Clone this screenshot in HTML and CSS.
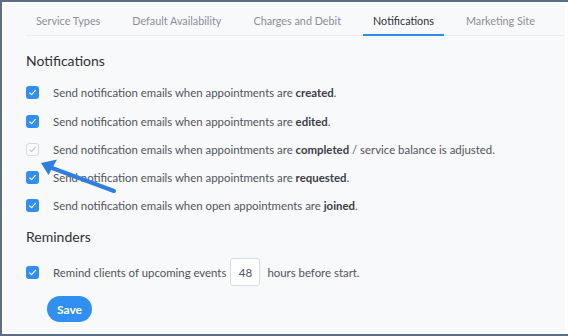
FILE: index.html
```html
<!DOCTYPE html>
<html>
<head>
<meta charset="utf-8">
<link rel="stylesheet" href="styles.css">
</head>
<body>
<div class="frame">
  <div class="panel">
    <nav class="tabs">
      <span class="tab">Service Types</span>
      <span class="tab">Default Availability</span>
      <span class="tab">Charges and Debit</span>
      <span class="tab active">Notifications</span>
      <span class="tab">Marketing Site</span>
    </nav>
    <section class="content">
      <h2 class="heading">Notifications</h2>
      <ul class="list">
        <li class="row"><span class="cb on"><svg viewBox="0 0 13 13"><path d="M3.6 6.8 L5.6 8.7 L9.4 4.4"/></svg></span><span class="label">Send notification emails when appointments are <b>created</b>.</span></li>
        <li class="row"><span class="cb on"><svg viewBox="0 0 13 13"><path d="M3.6 6.8 L5.6 8.7 L9.4 4.4"/></svg></span><span class="label">Send notification emails when appointments are <b>edited</b>.</span></li>
        <li class="row"><span class="cb off"><svg viewBox="0 0 13 13"><path d="M3.6 6.8 L5.6 8.7 L9.4 4.4"/></svg></span><span class="label">Send notification emails when appointments are <b>completed</b> / service balance is adjusted.</span></li>
        <li class="row"><span class="cb on"><svg viewBox="0 0 13 13"><path d="M3.6 6.8 L5.6 8.7 L9.4 4.4"/></svg></span><span class="label">Send notification emails when appointments are <b>requested</b>.</span></li>
        <li class="row"><span class="cb on"><svg viewBox="0 0 13 13"><path d="M3.6 6.8 L5.6 8.7 L9.4 4.4"/></svg></span><span class="label">Send notification emails when open appointments are <b>joined</b>.</span></li>
      </ul>
      <h2 class="heading reminders">Reminders</h2>
      <div class="row remind"><span class="cb on"><svg viewBox="0 0 13 13"><path d="M3.6 6.8 L5.6 8.7 L9.4 4.4"/></svg></span><span class="label">Remind clients of upcoming events</span><span class="num">48</span><span class="label">hours before start.</span></div>
      <button class="save">Save</button>
      <svg class="arrow" viewBox="0 0 100 50" width="100" height="50"><path class="shaft" d="M84 36 L22 13"/><path class="head" d="M11 8 L27 4.5 L18.5 20 Z"/></svg>
    </section>
  </div>
</div>
</body>
</html>
```

FILE: styles.css
```css
html, body { margin: 0; padding: 0; background: #fff; }
body { width: 568px; height: 336px; overflow: hidden; font-family: "Lato", "Noto Sans", sans-serif; }
.frame {
  box-sizing: border-box; height: 336px; width: 568px;
  border-left: 2px solid #5b6e84; border-top: 2px solid #5b6e84; border-bottom: 2px solid #5b6e84;
  padding: 2px 3px 2px 2px; background: #fff;
}
.panel { background: #f8f9fb; height: 100%; padding-left: 22px; box-sizing: border-box; }
.tabs { display: flex; gap: 12px; border-bottom: 1px solid #e9ecf0; height: 31px; align-items: stretch; }
.tab { padding: 2px 10px 0; font-size: 10.8px; color: #8a8f96; display: flex; align-items: center; white-space: nowrap; box-sizing: border-box; }
.tab.active { color: #2e3238; border-bottom: 2px solid #2d8cf0; margin-bottom: -1px; padding-top: 3px; }
.content { position: relative; padding-top: 17px; }
.heading { margin: 0; font-size: 14px; font-weight: 400; color: #2e3238; line-height: 16px; }
.list { list-style: none; margin: 17px 0 0; padding: 0; display: flex; flex-direction: column; gap: 14.8px; }
.row { display: flex; align-items: center; height: 13.5px; font-size: 11.4px; color: #4f555c; }
.row b { font-weight: 700; color: #3b4046; }
.cb { width: 13px; height: 13px; border-radius: 3px; box-sizing: border-box; flex: none; margin-right: 14px; display: flex; }
.cb svg { width: 13px; height: 13px; fill: none; stroke-width: 1.1; stroke-linecap: round; stroke-linejoin: round; }
.cb.on { background: #2f8ff2; }
.cb.on svg { stroke: #fff; }
.cb.off { border: 1px solid #d6d9de; background: #fbfbfc; }
.cb.off svg { stroke: #c3c6cb; margin: -1px; }
.reminders { margin-top: 16px; }
.remind { margin-top: 21px; }
.num { box-sizing: border-box; width: 30px; height: 28px; border: 1px solid #d8dbe0; border-radius: 3px; background: #fff; display: flex; align-items: center; justify-content: center; margin: 0 7px 0 4px; font-size: 11.5px; color: #4f555c; }
.save { display: block; margin: 17px 0 0 21px; height: 26px; width: 45px; border: none; border-radius: 13px; background: #2f8ff2; color: #fff; font-family: inherit; font-weight: 700; font-size: 12px; padding: 0; }
.arrow { position: absolute; left: 4px; top: 119px; overflow: visible; }
.arrow .shaft { stroke: #2f7fe2; stroke-width: 4; stroke-linecap: round; fill: none; }
.arrow .head { fill: #2f7fe2; }
```
